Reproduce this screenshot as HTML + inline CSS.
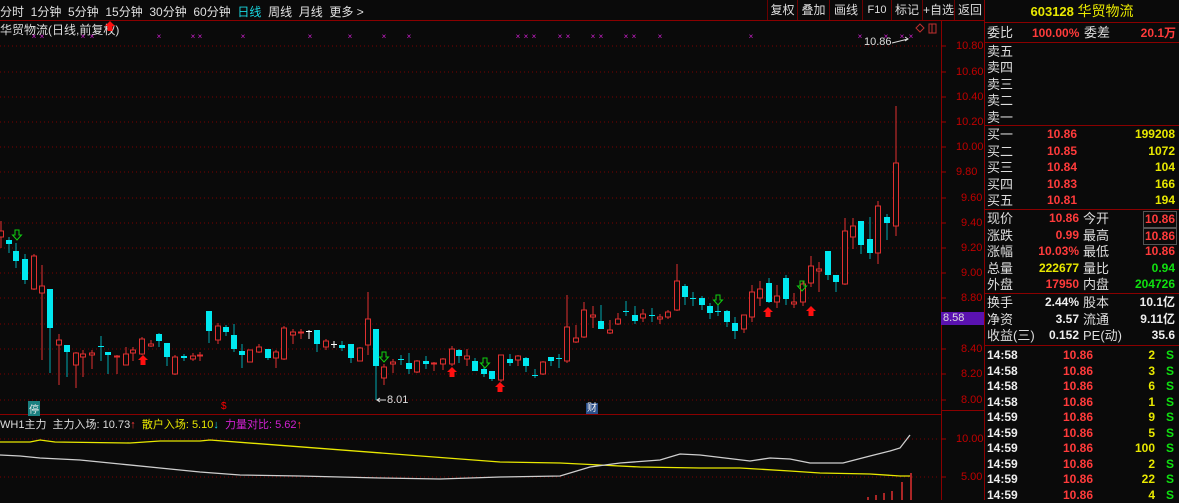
<!DOCTYPE html>
<html><head><meta charset="utf-8">
<style>
*{margin:0;padding:0;box-sizing:border-box}
body{width:1179px;height:500px;background:#0a0a0a;overflow:hidden;position:relative;font-family:"Liberation Sans","Noto Sans CJK SC",sans-serif;color:#ddd}
.a{position:absolute;white-space:nowrap}
.tb{font-size:12px;top:3px;color:#e0e0e0}
.btn{position:absolute;top:0;height:21px;border-left:1px solid #6a0000;font-size:12px;color:#ddd;text-align:center;line-height:21px}
.ax{position:absolute;left:956px;font-size:11px;color:#c00000}
.rp{position:absolute;left:985px;width:194px;font-size:13px}
.l{position:absolute;left:2px;color:#ddd;line-height:16px}
.n{position:absolute;font-weight:bold;font-size:12px;line-height:15px}
.r{color:#ff3b3b}.y{color:#e8e800}.g{color:#10e010}.w{color:#eee}
</style></head><body>
<div class="a tb" style="left:0">分时&nbsp; 1分钟&nbsp; 5分钟&nbsp; 15分钟&nbsp; 30分钟&nbsp; 60分钟&nbsp; <span style="color:#19d7e0">日线</span>&nbsp; 周线&nbsp; 月线&nbsp; 更多 &gt;</div>
<div class="btn" style="left:767px;width:30px">复权</div>
<div class="btn" style="left:797px;width:32px">叠加</div>
<div class="btn" style="left:829px;width:33px">画线</div>
<div class="btn" style="left:862px;width:29px;font-size:11px">F10</div>
<div class="btn" style="left:891px;width:31px">标记</div>
<div class="btn" style="left:922px;width:32px">+自选</div>
<div class="btn" style="left:954px;width:31px">返回</div>
<div class="a" style="left:0;top:20px;width:985px;height:1px;background:#8a0000"></div>
<div class="a" style="left:0;top:21px;font-size:12px;color:#ddd">华贸物流(日线,前复权)</div>
<div class="a" style="left:0;top:414px;width:941px;height:1px;background:#8a0000"></div>
<div class="a" style="left:941px;top:21px;width:1px;height:479px;background:#8a0000"></div>
<div class="a" style="left:941px;top:410px;width:44px;height:1px;background:#8a0000"></div>
<div class="a" style="left:984px;top:0;width:1px;height:500px;background:#8a0000"></div>
<svg class="a" style="left:0;top:0" width="985" height="500" id="sv"></svg>
<div class="ax" style="top:40px">10.80</div><div class="ax" style="top:66px">10.60</div>
<div class="ax" style="top:91px">10.40</div><div class="ax" style="top:116px">10.20</div>
<div class="ax" style="top:141px">10.00</div><div class="ax" style="top:166px">9.80</div>
<div class="ax" style="top:192px;left:961px">9.60</div><div class="ax" style="top:217px;left:961px">9.40</div>
<div class="ax" style="top:242px;left:961px">9.20</div><div class="ax" style="top:267px;left:961px">9.00</div>
<div class="ax" style="top:292px;left:961px">8.80</div>
<div class="ax" style="top:343px;left:961px">8.40</div><div class="ax" style="top:368px;left:961px">8.20</div>
<div class="ax" style="top:394px;left:961px">8.00</div>
<div class="a" style="left:941px;top:312px;width:43px;height:13px;background:#5a12b0;color:#ddd;font-size:11px;line-height:13px;padding-left:2px">8.58</div>
<div class="ax" style="top:433px">10.00</div><div class="ax" style="top:471px;left:961px">5.00</div>
<div class="a" style="left:864px;top:36px;font-size:11px;color:#ddd">10.86</div>
<div class="a" style="left:387px;top:394px;font-size:11px;color:#ddd">8.01</div>
<div class="a" style="left:28px;top:401px;font-size:10px;background:#1a8080;color:#eee;padding:0 1px">停</div>
<div class="a" style="left:221px;top:401px;font-size:10px;color:#f00">$</div>
<div class="a" style="left:586px;top:403px;font-size:10px;background:#2a4f8a;color:#eee;padding:0 1px;line-height:11px">财</div>
<div class="a" style="left:0;top:416px;font-size:11px;color:#ddd">WH1主力&nbsp; 主力入场: 10.73<span class="r">↑</span>&nbsp; <span class="y">散户入场: 5.10</span><span style="color:#19d7e0">↓</span>&nbsp; <span style="color:#d020d0">力量对比: 5.62</span><span class="r">↑</span></div>
<div class="rp" style="top:0;height:23px;border-bottom:1px solid #8a0000;text-align:center;line-height:23px;color:#e8e800;font-weight:bold;font-size:13px">603128 <span style="font-weight:normal;font-size:14px">华贸物流</span></div>
<div class="rp" style="top:23px;height:20px;border-bottom:1px solid #8a0000">
<span class="l" style="top:2px">委比</span><span class="n r" style="left:47px;top:3px">100.00%</span><span class="l" style="left:99px;top:2px">委差</span><span class="n r" style="right:3px;top:3px">20.1万</span></div>
<div class="rp" style="top:43px;height:83px;border-bottom:1px solid #8a0000">
<span class="l" style="top:1px">卖五</span><span class="l" style="top:17px">卖四</span><span class="l" style="top:34px">卖三</span><span class="l" style="top:50px">卖二</span><span class="l" style="top:67px">卖一</span></div>
<div class="rp" style="top:126px;height:84px;border-bottom:1px solid #8a0000">
<span class="l" style="top:1px">买一</span><span class="l" style="top:18px">买二</span><span class="l" style="top:34px">买三</span><span class="l" style="top:51px">买四</span><span class="l" style="top:67px">买五</span>
<span class="n r" style="left:62px;top:1px">10.86</span><span class="n r" style="left:62px;top:18px">10.85</span><span class="n r" style="left:62px;top:34px">10.84</span><span class="n r" style="left:62px;top:51px">10.83</span><span class="n r" style="left:62px;top:67px">10.81</span>
<span class="n y" style="right:4px;top:1px">199208</span><span class="n y" style="right:4px;top:18px">1072</span><span class="n y" style="right:4px;top:34px">104</span><span class="n y" style="right:4px;top:51px">166</span><span class="n y" style="right:4px;top:67px">194</span></div>
<div class="rp" style="top:210px;height:84px;border-bottom:1px solid #8a0000">
<span class="l" style="top:1px">现价</span><span class="l" style="top:18px">涨跌</span><span class="l" style="top:34px">涨幅</span><span class="l" style="top:51px">总量</span><span class="l" style="top:67px">外盘</span>
<span class="n r" style="right:100px;top:1px">10.86</span><span class="n r" style="right:100px;top:18px">0.99</span><span class="n r" style="right:100px;top:34px">10.03%</span><span class="n y" style="right:100px;top:51px">222677</span><span class="n r" style="right:100px;top:67px">17950</span>
<span class="l" style="left:98px;top:1px">今开</span><span class="l" style="left:98px;top:18px">最高</span><span class="l" style="left:98px;top:34px">最低</span><span class="l" style="left:98px;top:51px">量比</span><span class="l" style="left:98px;top:67px">内盘</span>
<span class="n r" style="right:2px;top:1px;border:1px solid #555;padding:0 1px">10.86</span><span class="n r" style="right:2px;top:18px;border:1px solid #555;padding:0 1px">10.86</span><span class="n r" style="right:4px;top:34px">10.86</span><span class="n g" style="right:4px;top:51px">0.94</span><span class="n g" style="right:4px;top:67px">204726</span></div>
<div class="rp" style="top:294px;height:52px;border-bottom:1px solid #8a0000">
<span class="l" style="top:1px">换手</span><span class="l" style="top:18px">净资</span><span class="l" style="top:34px">收益(三)</span>
<span class="n w" style="right:100px;top:1px">2.44%</span><span class="n w" style="right:100px;top:18px">3.57</span><span class="n w" style="right:100px;top:34px">0.152</span>
<span class="l" style="left:98px;top:1px">股本</span><span class="l" style="left:98px;top:18px">流通</span><span class="l" style="left:98px;top:34px">PE(动)</span>
<span class="n w" style="right:4px;top:1px">10.1亿</span><span class="n w" style="right:4px;top:18px">9.11亿</span><span class="n w" style="right:4px;top:34px">35.6</span></div>
<div class="rp" style="top:346px;height:154px" id="tk"></div>
<script>
var tk=document.getElementById('tk'),h='';
var d=[['14:58',2],['14:58',3],['14:58',6],['14:58',1],['14:59',9],['14:59',5],['14:59',100],['14:59',2],['14:59',22],['14:59',4]];
d.forEach(function(r,i){var t=2+i*15.5;h+='<span class="n w" style="left:2px;top:'+t+'px">'+r[0]+'</span><span class="n r" style="left:78px;top:'+t+'px">10.86</span><span class="n y" style="right:24px;top:'+t+'px">'+r[1]+'</span><span class="n g" style="right:5px;top:'+t+'px">S</span>';});
tk.innerHTML=h;
var s='';
[46,72,97,122,147,172,198,223,248,273,298,324,349,374,400].forEach(function(y){s+='<line x1="0" x2="940" y1="'+y+'" y2="'+y+'" stroke="#7a0000" stroke-dasharray="1 3"/><line x1="941" x2="946" y1="'+y+'" y2="'+y+'" stroke="#a00000"/>';});
[439,477].forEach(function(y){s+='<line x1="0" x2="940" y1="'+y+'" y2="'+y+'" stroke="#7a0000" stroke-dasharray="1 3"/><line x1="941" x2="946" y1="'+y+'" y2="'+y+'" stroke="#a00000"/>';});
var C=[[1,'r',231,237,221,248],[9,'c',240,244,237,253],[16,'c',251,261,243,268],[25,'c',259,280,254,284],[34,'r',256,289,254,290],[42,'r',286,293,265,360],[50,'c',289,328,289,373],[59,'r',340,345,334,385],[67,'c',345,352,345,377],[76,'r',353,365,352,388],[83,'r',354,357,350,377],[92,'r',353,355,350,369],[101,'c',346,347,336,361],[108,'c',352,355,352,374],[117,'r',356,357,355,374],[126,'r',354,365,347,365],[133,'r',350,353,347,361],[142,'r',339,354,337,355],[151,'r',344,346,340,347],[159,'c',334,341,333,347],[167,'c',343,357,343,366],[175,'r',357,374,355,375],[184,'c',356,358,354,361],[193,'r',356,359,353,361],[200,'r',355,356,352,361],[209,'c',311,331,311,343],[218,'r',326,340,323,344],[226,'c',327,332,325,336],[234,'c',335,349,324,352],[242,'c',351,355,344,368],[250,'r',350,362,350,362],[259,'r',347,352,344,353],[268,'c',349,358,349,360],[276,'r',352,358,350,368],[284,'r',328,359,326,360],[293,'r',332,335,329,344],[301,'r',332,333,329,339],[309,'w',331,332,330,339],[317,'c',330,344,330,352],[326,'r',341,347,339,350],[334,'w',344,345,341,348],[342,'c',345,348,341,351],[351,'c',344,358,344,363],[360,'r',348,361,347,361],[368,'r',319,345,292,355],[376,'c',329,366,329,400],[384,'r',367,378,364,385],[393,'r',362,364,359,373],[401,'c',359,360,355,365],[409,'c',363,369,353,374],[417,'r',361,372,360,373],[426,'c',361,364,356,369],[434,'r',363,364,362,371],[443,'r',359,364,358,370],[452,'r',349,364,346,366],[459,'c',350,356,349,363],[467,'r',356,359,349,366],[475,'c',361,371,358,371],[484,'c',369,374,367,377],[492,'c',371,379,371,381],[501,'r',355,380,355,382],[510,'c',359,363,354,366],[518,'r',356,360,355,366],[526,'c',358,366,357,372],[535,'c',375,376,369,378],[543,'r',362,374,361,375],[551,'c',357,361,357,366],[559,'c',358,359,354,368],[567,'r',327,361,295,363],[576,'r',338,342,325,343],[584,'r',310,337,302,338],[593,'r',315,317,306,328],[601,'c',321,329,305,329],[610,'r',330,333,320,334],[618,'r',319,324,313,325],[626,'c',311,312,301,316],[635,'c',315,321,306,324],[643,'r',314,318,309,322],[652,'c',315,316,308,322],[660,'r',317,319,314,324],[668,'r',312,317,310,319],[677,'r',281,310,264,311],[685,'c',286,297,284,305],[693,'c',298,299,292,306],[702,'c',298,305,296,310],[710,'c',306,313,303,319],[718,'c',311,312,305,316],[727,'c',311,322,310,327],[735,'c',323,331,317,339],[744,'r',315,329,315,333],[752,'r',292,317,285,322],[760,'r',289,298,281,306],[769,'c',283,302,278,303],[777,'r',296,302,285,308],[786,'c',278,299,275,305],[794,'r',302,304,293,308],[803,'r',284,302,281,306],[811,'r',266,283,256,287],[819,'r',269,271,262,292],[828,'c',251,275,251,280],[836,'c',275,282,275,292],[845,'r',231,284,218,285],[853,'r',226,237,218,249],[861,'c',221,245,221,254],[870,'c',239,253,217,259],[878,'r',206,253,201,264],[887,'c',217,223,214,240],[896,'r',163,226,106,236]];
C.forEach(function(c){var x=c[0],col=c[1]=='r'?'#e03030':c[1]=='c'?'#00e8f0':'#ffffff',wc=c[1]=='c'?'#00a8b0':col;
s+='<line x1="'+x+'" x2="'+x+'" y1="'+c[4]+'" y2="'+c[5]+'" stroke="'+wc+'"/>';
var h=Math.max(1,c[3]-c[2]);
if(c[1]=='r')s+='<rect x="'+(x-2.5)+'" y="'+c[2]+'" width="5" height="'+h+'" fill="#0a0a0a" stroke="'+col+'"/>';
else s+='<rect x="'+(x-3)+'" y="'+c[2]+'" width="6" height="'+h+'" fill="'+col+'"/>';});
function up(x,y){s+='<path d="M'+x+' '+(y-5)+'l5 5h-2.5v5h-5v-5h-2.5z" fill="#ff1010"/>';}
function dn(x,y){s+='<path d="M'+(x-2)+' '+(y-5)+'h4v5h2.5l-4.5 5l-4.5-5h2.5z" fill="none" stroke="#10d010"/>';}
[[143,360],[452,372],[500,387],[768,312],[811,311],[110,26]].forEach(function(p){up(p[0],p[1]);});
[[17,235],[384,357],[485,363],[718,300],[802,286]].forEach(function(p){dn(p[0],p[1]);});
[34,42,83,92,159,193,200,243,310,350,384,409,518,526,534,560,568,593,601,626,634,660,751,860,886,902,911].forEach(function(x){s+='<text x="'+x+'" y="39" fill="#d020d0" font-size="8" text-anchor="middle" font-family="Liberation Sans">×</text>';});
s+='<path d="M892 43l16-4m-3-2l3 2l-3 2" stroke="#ddd" fill="none"/><path d="M386 400h-9m3-2l-3 2l3 2" stroke="#ddd" fill="none"/>';
s+='<path d="M920 24l4 4l-4 4l-4-4z" stroke="#c03030" fill="none"/><rect x="929" y="24" width="7" height="9" fill="none" stroke="#c03030"/><line x1="932" x2="932" y1="24" y2="33" stroke="#c03030"/>';
s+='<polyline fill="none" stroke="#e8e800" stroke-width="1.3" points="0,442 30,442 40,440 55,442 130,443 160,441 200,441 210,440 500,462 560,463 600,465 640,467 700,468 740,468 790,471 820,473 870,474 900,476 910,476"/>';
s+='<polyline fill="none" stroke="#cfcfcf" stroke-width="1.3" points="0,455 20,456 40,458 80,460 120,464 160,468 200,472 240,475 300,476 340,477 380,478 440,479 500,477 560,476 590,467 620,463 660,460 680,454 700,455 750,461 770,458 790,459 810,463 843,463 870,456 890,451 900,448 910,435"/>';
[[868,497],[876,495],[884,493],[892,491],[902,482],[911,473]].forEach(function(b){s+='<line x1="'+b[0]+'" x2="'+b[0]+'" y1="'+b[1]+'" y2="500" stroke="#e03030" stroke-width="1.5"/>';});
document.getElementById('sv').innerHTML=s;
</script>
</body></html>
